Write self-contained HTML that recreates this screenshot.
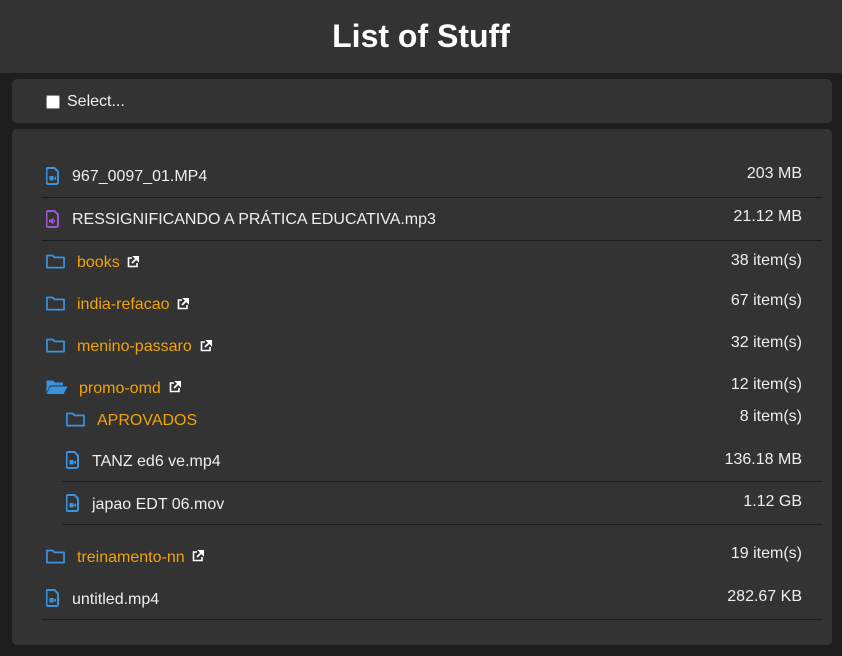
<!DOCTYPE html>
<html><head><meta charset="utf-8"><style>
*{margin:0;padding:0;box-sizing:border-box}
body{width:842px;height:656px;background:#1e1e1e;font-family:"Liberation Sans",sans-serif;position:relative;overflow:hidden;color:#eee}
.hdr{position:absolute;left:0;top:0;width:842px;height:73px;background:#333;text-align:center;font-weight:bold;font-size:32px;line-height:73px;color:#fff}
.p{position:absolute;background:#333;border-radius:5px;left:12px;width:820px}
.t{position:absolute;font-size:16px;line-height:18px;white-space:nowrap}
.s{position:absolute;right:40px;font-size:16px;line-height:18px;text-align:right}
.o{color:#f0a30a}
.ln{position:absolute;height:1px;background:#1c1c1c;right:20px}
svg{position:absolute}
.cb{position:absolute;left:46px;top:95px;width:14px;height:14px;background:#fff;border:1.5px solid #8a8a95;border-radius:2px}
</style></head><body>
<div class="hdr">List of Stuff</div>
<div class="p" style="top:79px;height:44px"></div>
<div class="p" style="top:129px;height:516px"></div>
<div class="cb"></div>
<div class="t" style="left:67px;top:93px;color:#eee">Select...</div>

<svg width="0" height="0"><defs>
<symbol id="file" viewBox="0 0 13 18"><path d="M2 1h6.5L12 4.5V15.5A1.5 1.5 0 0 1 10.5 17H2A1.5 1.5 0 0 1 .5 15.5V2.5A1.5 1.5 0 0 1 2 1Z" fill="none" stroke="currentColor" stroke-width="2"/><path d="M3.5 9h4v4.5h-4zM7.5 11.2l2.5-2v4z" fill="currentColor"/></symbol>
<symbol id="aud" viewBox="0 0 13 18"><path d="M2 1h6.5L12 4.5V15.5A1.5 1.5 0 0 1 10.5 17H2A1.5 1.5 0 0 1 .5 15.5V2.5A1.5 1.5 0 0 1 2 1Z" fill="none" stroke="currentColor" stroke-width="2"/><path d="M3.3 10h1.5l2.2-1.8v5.6l-2.2-1.8H3.3z M8 9.5q1.3 1.5 0 3" fill="currentColor" stroke="currentColor" stroke-width=".8"/></symbol>
<symbol id="fold" viewBox="0 0 20 16"><path d="M1 2.2h6l2 2h10V15H1Z" fill="none" stroke="currentColor" stroke-width="1.8" stroke-linejoin="round"/></symbol>
<symbol id="ofold" viewBox="0 0 22 16"><path d="M0.5 1.5h6.5l2 2h8v3H4L0.5 14Z M4.5 7.5H21.5L17.5 15H0.5Z" fill="currentColor"/></symbol>
<symbol id="ext" viewBox="0 0 12 12"><path d="M5 2H1.5v8.5H10V7" fill="none" stroke="currentColor" stroke-width="1.6"/><path d="M7 .5h4.5V5zM11 1L5 7" stroke="currentColor" stroke-width="1.8" fill="currentColor"/></symbol>
</defs></svg>

<svg style="left:46px;top:167px;color:#3a93e0" width="13" height="18"><use href="#file"/></svg>
<div class="t" style="left:72px;top:168px">967_0097_01.MP4</div>
<div class="s" style="top:165px">203 MB</div>
<div class="ln" style="left:42px;top:197px"></div>

<svg style="left:46px;top:210px;color:#9b59d0" width="13" height="18"><use href="#aud"/></svg>
<div class="t" style="left:72px;top:211px">RESSIGNIFICANDO A PRÁTICA EDUCATIVA.mp3</div>
<div class="s" style="top:208px">21.12 MB</div>
<div class="ln" style="left:42px;top:240px"></div>

<svg style="left:46px;top:253px;color:#3a93e0" width="19" height="16"><use href="#fold"/></svg>
<div class="t o" style="left:77px;top:254px">books</div>
<svg style="left:127px;top:256px;color:#fff" width="12" height="12"><use href="#ext"/></svg>
<div class="s" style="top:252px">38 item(s)</div>

<svg style="left:46px;top:295px;color:#3a93e0" width="19" height="16"><use href="#fold"/></svg>
<div class="t o" style="left:77px;top:296px">india-refacao</div>
<svg style="left:177px;top:298px;color:#fff" width="12" height="12"><use href="#ext"/></svg>
<div class="s" style="top:292px">67 item(s)</div>

<svg style="left:46px;top:337px;color:#3a93e0" width="19" height="16"><use href="#fold"/></svg>
<div class="t o" style="left:77px;top:338px">menino-passaro</div>
<svg style="left:200px;top:340px;color:#fff" width="12" height="12"><use href="#ext"/></svg>
<div class="s" style="top:334px">32 item(s)</div>

<svg style="left:46px;top:379px;color:#3a93e0" width="22" height="16"><use href="#ofold"/></svg>
<div class="t o" style="left:79px;top:380px">promo-omd</div>
<svg style="left:169px;top:381px;color:#fff" width="12" height="12"><use href="#ext"/></svg>
<div class="s" style="top:376px">12 item(s)</div>

<svg style="left:66px;top:411px;color:#3a93e0" width="19" height="16"><use href="#fold"/></svg>
<div class="t o" style="left:97px;top:412px">APROVADOS</div>
<div class="s" style="top:408px">8 item(s)</div>

<svg style="left:66px;top:451px;color:#3a93e0" width="13" height="18"><use href="#file"/></svg>
<div class="t" style="left:92px;top:453px">TANZ ed6 ve.mp4</div>
<div class="s" style="top:451px">136.18 MB</div>
<div class="ln" style="left:62px;top:481px"></div>

<svg style="left:66px;top:494px;color:#3a93e0" width="13" height="18"><use href="#file"/></svg>
<div class="t" style="left:92px;top:496px">japao EDT 06.mov</div>
<div class="s" style="top:493px">1.12 GB</div>
<div class="ln" style="left:62px;top:524px"></div>

<svg style="left:46px;top:548px;color:#3a93e0" width="19" height="16"><use href="#fold"/></svg>
<div class="t o" style="left:77px;top:549px">treinamento-nn</div>
<svg style="left:192px;top:550px;color:#fff" width="12" height="12"><use href="#ext"/></svg>
<div class="s" style="top:545px">19 item(s)</div>

<svg style="left:46px;top:589px;color:#3a93e0" width="13" height="18"><use href="#file"/></svg>
<div class="t" style="left:72px;top:591px">untitled.mp4</div>
<div class="s" style="top:588px">282.67 KB</div>
<div class="ln" style="left:42px;top:619px"></div>
</body></html>
